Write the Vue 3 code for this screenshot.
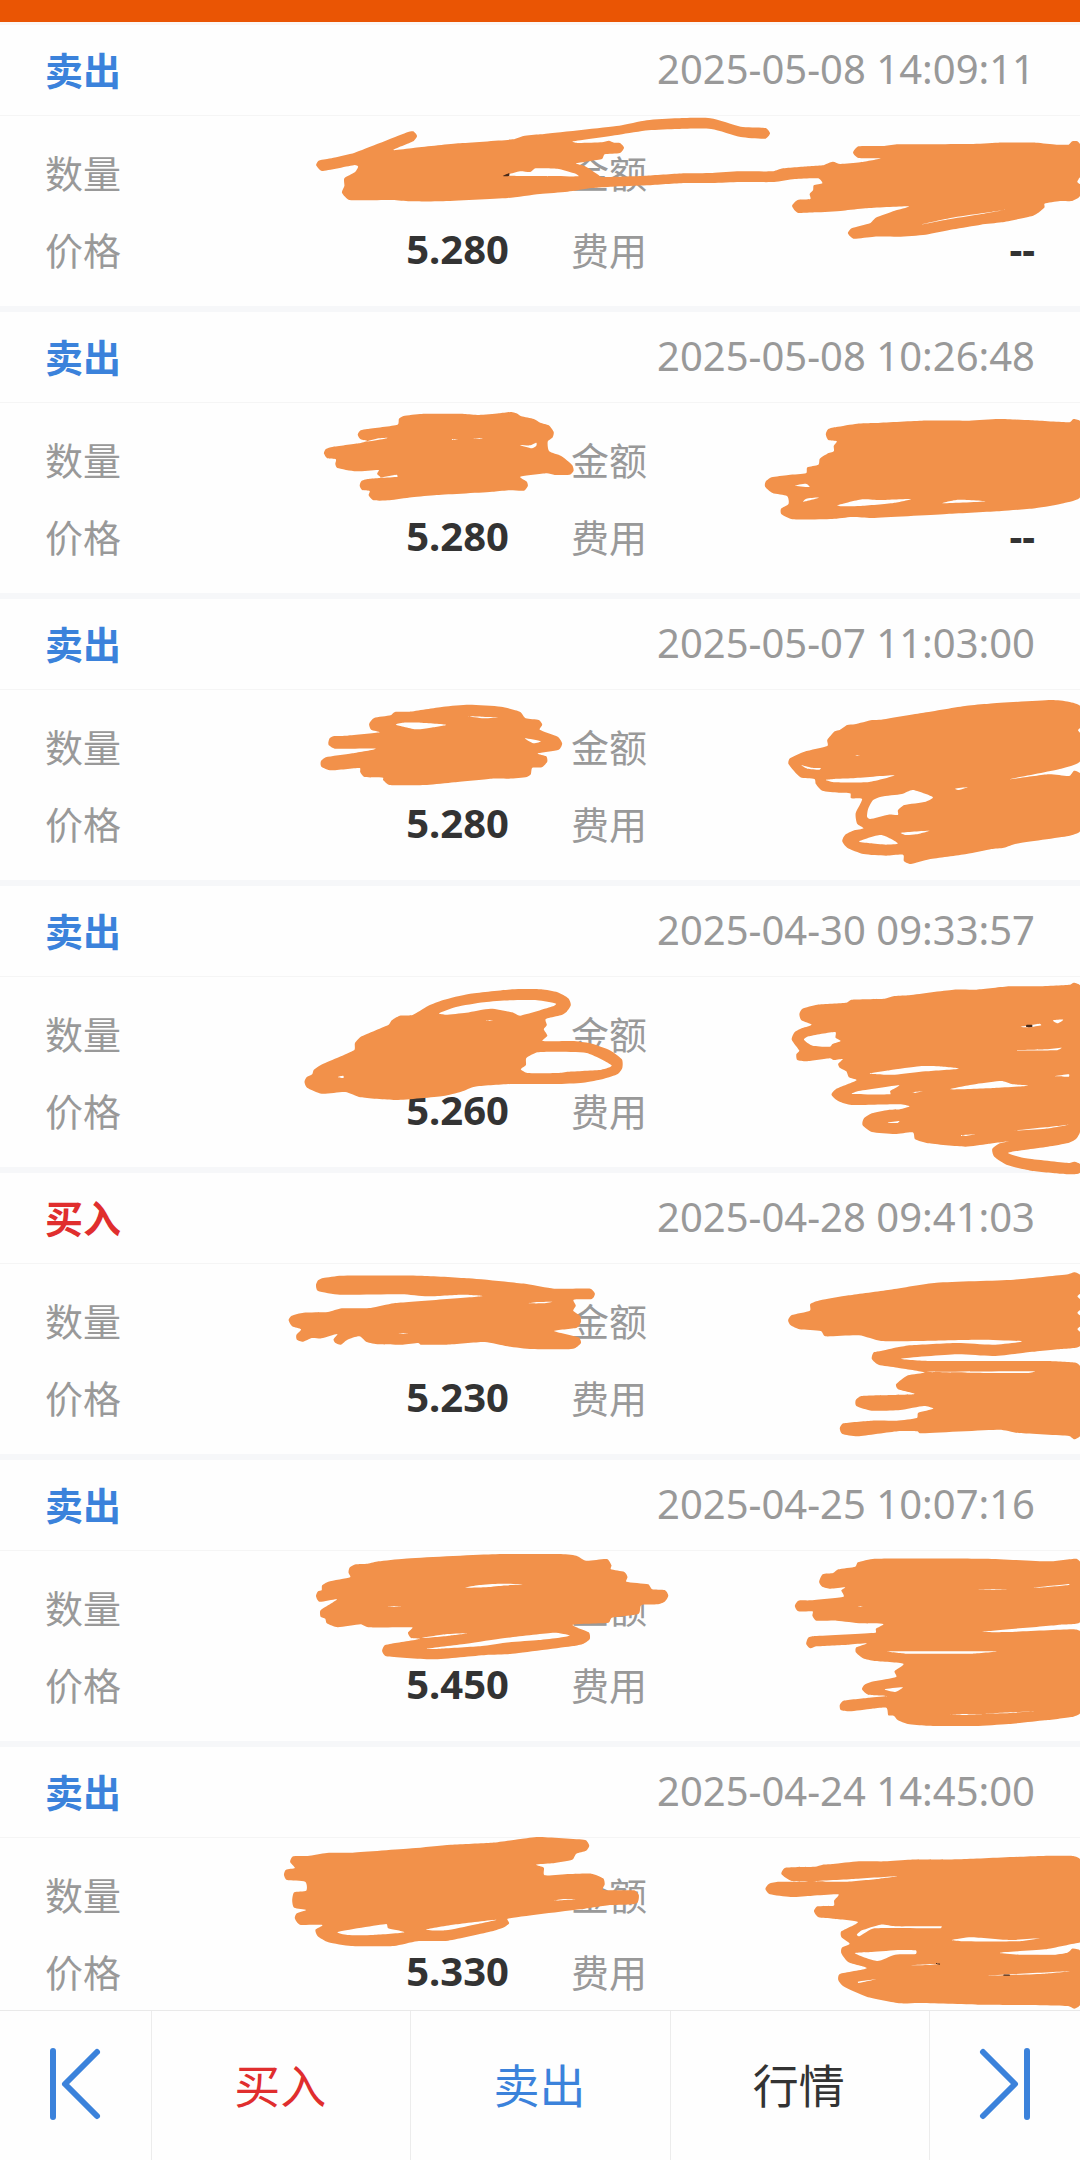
<script setup>
// Each sketch is drawn in its own box: x, y, w, h place it on the list,
// vw and vh give the drawing's coordinate range.
const records = [
  {
    side: 'sell', time: '2025-05-08 14:09:11', price: '5.280', fee: '--',
    sketch: {
      x: 0, y: 0, w: 1080, h: 320, vw: 3136, vh: 960,
      ink: [
        '918,496 925,482 945,478 968,473 1030,458 1185,396 1200,394 1211,408 1200,424 1142,450 1200,444 1330,430 1490,418 1520,408 1568,403 1798,377 1878,361 1968,355 2063,355 2151,380 2223,384 2236,400 2223,416 2151,411 2065,387 1968,387 1883,391 1798,404 1663,424 1678,429 1748,427 1768,422 1783,428 1800,429 1812,443 1800,459 1756,463 1748,477 1673,490 1698,498 1738,525 1746,531 1878,527 1988,520 2068,519 2148,514 2243,514 2268,506 2348,499 2388,496 2418,485 2440,492 2498,487 2558,475 2493,474 2477,458 2493,439 2568,438 2608,433 2818,432 2898,428 3008,428 3068,434 3103,434 3113,424 3128,424 3138,436 3138,580 3133,592 3113,603 3078,603 3033,611 3033,622 3018,636 2998,648 2908,667 2848,674 2768,688 2688,704 2608,710 2538,710 2478,716 2462,700 2473,685 2526,670 2543,653 2598,632 2638,619 2513,625 2448,632 2368,637 2316,638 2300,618 2316,600 2353,597 2351,582 2361,570 2363,556 2388,550 2376,535 2308,537 2248,546 2148,546 2068,549 1988,549 1878,556 1778,560 1718,564 1648,575 1568,582 1475,594 1280,604 1190,604 1140,600 1015,600 993,578 1000,558 1000,535 1030,517 1040,500 1030,495 935,513'
      ],
      gaps: [
        '1478,523 1510,514 1540,516 1555,505 1618,506 1668,520 1680,529 1568,528 1478,527',
        '2673,674 2760,654 2850,640 2920,629 2850,642 2760,657',
        '3128,545 3138,530 3138,552'
      ],
      specks: ['1460,528 1478,520 1478,528']
    }
  },
  {
    side: 'sell', time: '2025-05-08 10:26:48', price: '5.280', fee: '--',
    sketch: {
      x: 300, y: 390, w: 780, h: 220, vw: 1568, vh: 660,
      ink: [
        '48,190 52,177 65,171 118,160 135,153 122,148 116,134 122,121 135,117 196,104 199,86 208,78 245,72 330,72 360,75 400,70 425,66 435,70 445,79 470,87 483,98 500,106 510,126 508,142 498,155 501,184 525,198 547,225 550,242 542,254 512,255 496,250 443,260 456,275 458,288 450,302 422,301 390,305 275,315 225,322 180,331 148,331 138,316 140,303 125,300 120,287 124,272 140,266 162,263 155,252 158,240 113,244 75,234 71,222 72,208 55,205',
        '1057,133 1062,117 1078,111 1120,101 1155,99 1250,92 1345,92 1405,87 1470,91 1547,97 1555,87 1568,93 1568,322 1535,340 1478,355 1410,363 1300,372 1150,384 1110,381 1070,387 990,388 968,373 967,356 982,342 979,318 950,309 935,290 936,275 948,262 982,255 1017,250 1020,232 1042,224 1045,206 1060,191 1073,184 1073,168 1079,154 1062,150'
      ],
      gaps: [
        '134,155 158,145 176,143 168,147', '305,148 317,148 311,150', '347,147 367,144 361,147',
        '442,165 462,166 475,158 475,167 466,175', '162,263 194,254 196,260',
        '995,287 1017,281 1024,291', '1012,335 1018,326 1043,323', '1080,347 1130,328 1165,330 1228,327 1193,339 1125,348', '1292,340 1323,329 1380,334'
      ],
      specks: []
    }
  },
  {
    side: 'sell', time: '2025-05-07 11:03:00', price: '5.280', fee: '',
    sketch: {
      x: 300, y: 680, w: 780, h: 220, vw: 1568, vh: 660,
      ink: [
        '57,187 60,174 69,168 95,167 160,157 143,149 139,132 149,114 182,106 191,96 220,95 288,80 340,74 404,80 442,95 454,115 480,120 487,134 482,149 518,170 527,190 520,209 478,220 495,229 497,245 486,262 467,263 464,283 456,291 420,296 385,296 310,307 255,315 180,315 167,300 167,293 130,291 121,276 120,264 62,271 43,260 42,244 52,232 105,220 153,206 70,206 58,196',
        '982,252 985,235 1014,215 1060,198 1060,180 1075,154 1085,150 1100,135 1115,133 1150,120 1168,119 1250,99 1340,77 1385,71 1510,60 1545,65 1568,78 1568,244 1530,266 1425,298 1505,283 1546,288 1556,272 1568,280 1568,454 1545,468 1440,491 1415,503 1390,507 1340,522 1265,538 1228,552 1214,543 1212,524 1178,527 1133,522 1100,503 1090,483 1096,464 1112,452 1133,445 1120,431 1117,400 1130,357 1108,355 1106,340 1083,338 1050,332 1037,312 1034,297 1006,292'
      ],
      gaps: [
        '193,134 208,128 243,128 294,134 262,143 234,148', '338,109 364,110 399,112 369,115', '452,175 484,184 469,190',
        '1008,256 1028,263 1047,264 1044,269 1020,266', '1057,300 1074,297 1110,295 1195,286 1144,306 1075,307', '1140,410 1142,387 1152,360 1168,350 1210,342 1232,330 1272,351 1258,365 1215,375 1202,391 1202,405 1183,404 1146,417', '1124,484 1168,465 1202,490 1178,494 1145,490', '1208,458 1265,452 1238,463 1218,465', '1317,326 1342,322 1325,330', '1116,226 1125,226 1120,228', '1564,151 1568,145 1568,158'
      ],
      specks: []
    }
  },
  {
    side: 'sell', time: '2025-04-30 09:33:57', price: '5.260', fee: '',
    sketch: {
      x: 280, y: 970, w: 800, h: 220, vw: 1568, vh: 660,
      ink: [
        '48,336 52,322 63,313 66,300 80,285 145,241 147,219 160,199 213,164 219,151 235,137 260,135 290,108 320,90 370,72 455,58 512,58 544,67 565,85 570,105 562,125 552,135 521,147 523,165 517,178 524,197 515,213 573,213 608,220 648,242 670,268 671,293 662,312 635,326 594,338 540,342 455,342 382,350 355,365 320,378 228,390 158,382 128,366 82,371 53,353',
        '1018,132 1024,116 1053,104 1110,98 1120,89 1185,86 1202,79 1230,76 1320,59 1365,59 1430,49 1480,49 1548,44 1556,38 1568,46 1568,485 1560,507 1545,519 1505,530 1462,539 1427,549 1462,565 1545,579 1557,575 1568,582 1568,608 1555,613 1530,611 1472,602 1427,586 1400,560 1396,537 1409,521 1429,514 1387,522 1343,530 1270,520 1245,508 1240,487 1205,492 1160,486 1142,466 1144,446 1160,430 1192,420 1215,418 1234,409 1215,403 1120,405 1095,394 1081,374 1090,357 1130,331 1115,322 1110,304 1097,293 1094,282 1103,267 1085,270 1078,265 1032,274 1014,270 1012,253 1018,242 1003,209 1009,186 1024,174 1042,164 1022,151'
      ],
      gaps: [
        '312,130 345,111 400,97 452,91 504,91 541,101 535,109 471,137 455,127 413,116 365,128 325,134', '472,298 482,285 483,264 505,247 540,245 601,249 650,286 630,299 565,305 545,309 485,309', '113,321 124,317 124,324', '404,151 417,151 411,153',
        '1027,209 1036,199 1088,186 1089,203 1099,213 1083,222 1078,230 1044,227', '1452,170 1489,161 1492,166 1468,172', '1515,151 1535,149 1524,160', '1438,241 1502,238 1532,233 1522,241', '1156,311 1195,301 1254,289 1290,289 1330,296 1265,304 1205,314', '1121,372 1132,364 1213,346 1196,363 1196,373', '1240,367 1260,364 1245,369', '1314,358 1365,342 1414,333 1434,342 1466,347 1400,354', '1519,319 1546,313 1546,320', '1191,458 1214,453 1210,459', '1335,496 1363,493 1345,498', '1439,482 1500,472 1546,464 1500,476'
      ],
      specks: ['1463,165 1474,165 1474,171 1463,171']
    }
  },
  {
    side: 'buy', time: '2025-04-28 09:41:03', price: '5.230', fee: '',
    sketch: {
      x: 270, y: 1260, w: 810, h: 200, vw: 1568, vh: 600,
      ink: [
        '89,76 93,61 103,54 138,47 290,47 385,55 497,72 550,86 620,86 629,101 623,117 588,119 592,137 587,152 600,167 602,186 594,203 550,213 597,232 602,249 590,265 575,268 508,267 460,259 416,246 342,254 292,254 287,249 257,254 210,253 187,246 173,229 150,239 137,254 126,248 123,238 130,222 100,235 81,234 64,245 52,239 51,225 60,208 43,199 36,180 42,167 65,158 112,156 139,145 195,144 240,130 410,109 370,104 305,109 255,103 135,104 93,93',
        '1003,181 1010,165 1045,152 1046,132 1065,121 1120,106 1200,89 1290,68 1440,59 1545,43 1557,37 1568,45 1568,257 1530,267 1460,278 1400,288 1330,283 1222,296 1275,303 1505,303 1560,308 1568,318 1568,528 1557,538 1547,528 1450,519 1412,509 1258,520 1253,514 1215,514 1138,529 1108,522 1103,505 1110,490 1165,482 1213,482 1252,474 1255,458 1284,446 1266,438 1220,450 1165,452 1135,438 1134,420 1145,408 1203,405 1248,402 1216,388 1212,373 1235,346 1267,337 1215,323 1178,314 1165,297 1168,278 1180,274 1215,262 1240,256 1330,249 1400,254 1455,244 1375,239 1280,242 1183,243 1140,226 1075,229 1066,213 1025,208 1008,196'
      ],
      gaps: ['500,130 518,126 547,125 530,130', '249,220 267,220 258,222', '1267,336 1480,334 1465,339 1350,338', '1563,109 1568,102 1568,117', '1563,158 1568,151 1568,166', '1563,207 1568,200 1568,215'],
      specks: []
    }
  },
  {
    side: 'sell', time: '2025-04-25 10:07:16', price: '5.450', fee: '',
    sketch: {
      x: 270, y: 1540, w: 810, h: 200, vw: 1568, vh: 600,
      ink: [
        '152,98 154,83 166,73 189,71 210,64 260,56 430,43 560,42 593,47 612,62 652,57 661,76 660,88 686,96 692,111 690,125 732,133 740,148 764,150 771,167 764,185 750,193 719,195 713,222 662,233 655,248 586,254 617,277 619,297 607,311 587,318 465,342 418,345 315,358 225,349 217,333 222,316 235,311 290,297 273,294 267,278 275,262 190,262 175,253 131,262 110,250 107,236 98,230 98,211 130,178 96,185 89,168 93,154 100,151 101,136 113,125 155,112',
        '1063,126 1070,103 1090,99 1100,88 1133,80 1138,67 1170,56 1385,56 1508,64 1560,56 1568,65 1568,246 1530,254 1380,275 1430,276 1555,268 1568,274 1568,520 1555,530 1500,541 1430,552 1365,558 1270,557 1235,552 1215,540 1208,528 1197,526 1193,503 1165,506 1122,514 1105,510 1103,495 1110,482 1160,473 1195,468 1158,464 1146,448 1151,434 1169,424 1212,411 1209,394 1226,371 1170,363 1148,355 1134,337 1135,322 1155,310 1120,314 1058,319 1046,325 1038,312 1042,293 1055,288 1172,278 1173,266 1187,252 1145,250 1097,242 1058,242 1050,227 1050,214 1023,214 1016,198 1023,182 1045,181 1110,170 1106,151 1113,142 1085,146 1069,140'
      ],
      gaps: [
        '378,143 405,135 445,131 490,133 450,137 415,142', '228,199 254,199 240,201', '295,294 340,283 382,280 348,287', '303,326 380,311 455,294 550,278 580,286 560,293 520,300 455,308 410,318 330,326',
        '1370,148 1427,148 1400,150', '1478,143 1547,132 1547,135 1490,143', '1196,334 1405,334 1360,341 1230,341', '1190,448 1225,442 1210,456', '1316,522 1380,523 1345,525', '1385,521 1480,514 1420,520', '1138,199 1147,199 1143,201'
      ],
      specks: []
    }
  },
  {
    side: 'sell', time: '2025-04-24 14:45:00', price: '5.330', fee: '',
    sketch: {
      x: 270, y: 1820, w: 810, h: 200, vw: 1568, vh: 600,
      ink: [
        '39,126 45,109 73,108 110,99 160,98 275,85 350,74 430,68 485,57 520,51 610,60 618,77 612,92 593,101 585,119 545,130 515,134 530,143 532,166 580,162 622,161 645,175 648,193 645,210 705,211 714,225 711,249 690,254 660,255 600,268 460,296 463,310 453,322 430,334 345,362 285,364 240,378 157,378 113,367 92,348 88,329 101,315 58,314 48,295 52,280 70,270 47,263 43,242 47,217 70,212 68,185 33,180 27,164 31,149 48,144',
        '990,162 998,143 1055,140 1070,134 1090,132 1140,124 1190,124 1240,119 1335,118 1490,108 1555,108 1568,118 1568,367 1535,383 1470,395 1413,399 1450,404 1520,404 1545,397 1556,382 1568,392 1568,555 1557,566 1545,558 1400,554 1370,554 1255,549 1220,550 1155,530 1110,499 1100,480 1103,462 1155,445 1120,427 1106,400 1107,383 1122,371 1106,351 1106,334 1138,306 1090,296 1062,292 1053,274 1060,259 1091,257 1092,242 1100,223 1050,227 1008,231 968,223 959,207 966,191 985,185 1050,186 1010,183'
      ],
      gaps: [
        '131,336 225,312 229,325 260,337 200,345 150,345', '302,329 360,313 438,299 395,314 340,331', '550,242 570,237 594,238',
        '1050,184 1130,177 1214,169 1180,176 1115,185', '1136,344 1146,331 1182,314 1210,319 1300,319 1298,325 1170,325 1141,349', '1320,360 1357,352 1430,360 1490,355 1450,364 1340,364', '1413,398 1500,388 1568,368 1568,388 1550,385 1543,398 1515,403', '1132,400 1165,396 1220,390 1250,391 1250,402 1210,404 1175,423', '1138,485 1173,478 1140,489', '1235,436 1294,431 1275,435', '1390,467 1547,454 1500,461'
      ],
      specks: ['1289,431 1297,431 1296,434', '1420,464 1432,464 1432,467 1420,467']
    }
  }
]

const sideLabel = { sell: '卖出', buy: '买入' }
const PERIOD = 287
const TOP = 25

// Closed curve through a list of points, with gently rounded corners.
function curve(points) {
  const p = points.split(' ').map((s) => s.split(',').map(Number))
  const n = p.length
  const k = 1 / 9
  let d = `M${p[0]}`
  for (let i = 0; i < n; i++) {
    const a = p[(i + n - 1) % n]
    const b = p[i]
    const c = p[(i + 1) % n]
    const e = p[(i + 2) % n]
    const len = Math.hypot(c[0] - b[0], c[1] - b[1])
    const k1 = k * Math.min(1, (2 * len) / (Math.hypot(c[0] - a[0], c[1] - a[1]) + 1))
    const k2 = k * Math.min(1, (2 * len) / (Math.hypot(e[0] - b[0], e[1] - b[1]) + 1))
    d += `C${b[0] + (c[0] - a[0]) * k1},${b[1] + (c[1] - a[1]) * k1} ${c[0] - (e[0] - b[0]) * k2},${c[1] - (e[1] - b[1]) * k2} ${c}`
  }
  return d + 'Z'
}
</script>

<template>
  <div class="app">
    <header class="topbar"></header>
    <main class="list">
      <article v-for="(r, i) in records" :key="r.time" class="record">
        <div class="head">
          <h2 class="side" :class="r.side">{{ sideLabel[r.side] }}</h2>
          <time class="time">{{ r.time }}</time>
        </div>
        <dl class="details">
          <div class="pair"><dt>数量</dt><dd></dd></div>
          <div class="pair"><dt>金额</dt><dd></dd></div>
          <div class="pair"><dt>价格</dt><dd>{{ r.price }}</dd></div>
          <div class="pair"><dt>费用</dt><dd>{{ r.fee }}</dd></div>
        </dl>
        <svg class="sketch" :viewBox="`0 ${TOP + i * PERIOD} 1080 281`" preserveAspectRatio="none" aria-hidden="true">
          <svg
            class="layer"
            :x="r.sketch.x" :y="r.sketch.y" :width="r.sketch.w" :height="r.sketch.h"
            :viewBox="`0 0 ${r.sketch.vw} ${r.sketch.vh}`" preserveAspectRatio="none"
          >
            <path v-for="s in r.sketch.ink" :key="s" class="ink" :d="curve(s)" />
            <path v-for="s in r.sketch.gaps" :key="s" class="gap" :d="curve(s)" />
            <path v-for="s in r.sketch.specks" :key="s" class="speck" :d="curve(s)" />
          </svg>
        </svg>
      </article>
    </main>
    <nav class="actions">
      <button class="action edge" type="button" aria-label="上一条">
        <svg class="icon" viewBox="0 0 54 76"><path d="M4 5V71M48 6L16 38L48 70" /></svg>
      </button>
      <button class="action buy" type="button">买入</button>
      <button class="action sell" type="button">卖出</button>
      <button class="action" type="button">行情</button>
      <button class="action edge" type="button" aria-label="下一条">
        <svg class="icon" viewBox="0 0 54 76"><path d="M49 5V71M5 6L37 38L5 70" /></svg>
      </button>
    </nav>
  </div>
</template>

<style>
body {
  margin: 0;
  background: #fefefe;
}
</style>

<style scoped>
.app {
  display: flex;
  flex-direction: column;
  height: 100vh;
  overflow: hidden;
  color: #333;
  background: #fefefe;
  font-family: "Noto Sans CJK SC", "Noto Sans", sans-serif;
}
.topbar {
  flex: none;
  height: 22px;
  background: #ea5504;
  border-bottom: 3px solid #fbf7f5;
}
.list {
  flex: 1;
  min-height: 0;
  overflow: hidden auto;
  scrollbar-width: none;
}
.record {
  position: relative;
  border-bottom: 6px solid #f6f7f9;
}
.head {
  display: flex;
  align-items: center;
  justify-content: space-between;
  height: 88px;
  padding: 0 45px 2px;
  border-bottom: 1px solid #f5f5f5;
}
.side {
  margin: 0;
  font-size: 38px;
  line-height: 56px;
  font-weight: 700;
}
.time {
  font-family: "Noto Sans", "Noto Sans CJK SC", sans-serif;
  font-size: 40px;
  line-height: 56px;
  color: #999;
}
.sell {
  color: #3b82db;
}
.buy {
  color: #e02e2e;
}
.details {
  display: grid;
  grid-template-columns: 1fr 1fr;
  align-content: start;
  column-gap: 62px;
  height: 172px;
  margin: 0;
  padding: 18px 45px 0;
}
.pair {
  display: flex;
  justify-content: space-between;
  height: 77px;
  font-size: 38px;
  line-height: 76px;
}
dt {
  color: #999;
}
dd {
  margin: 0;
  font-family: "Noto Sans", "Noto Sans CJK SC", sans-serif;
  font-size: 40px;
  font-weight: 700;
}
.sketch {
  position: absolute;
  z-index: 1;
  top: 0;
  left: 0;
  width: 100%;
  height: 100%;
  overflow: visible;
  pointer-events: none;
}
.layer {
  overflow: visible;
}
.ink {
  fill: #f2914a;
}
.gap {
  fill: #fefefe;
}
.speck {
  fill: #4a2a18;
}
.actions {
  flex: none;
  display: flex;
  height: 149px;
  border-top: 1px solid #e9e9e9;
}
.action {
  flex: 1;
  display: flex;
  align-items: center;
  justify-content: center;
  padding: 0 2px 6px 0;
  border: 0;
  border-left: 1px solid #ececec;
  background: #fefefe;
  color: #333;
  font: inherit;
  font-size: 46px;
}
.action.buy {
  color: #e02e2e;
}
.action.sell {
  color: #3b82db;
}
.action.edge {
  flex: 0 0 151px;
  padding: 0 0 4px;
}
.action:first-child {
  border-left: 0;
}
.icon {
  width: 54px;
  height: 76px;
  fill: none;
  stroke: #3b82db;
  stroke-width: 6;
  stroke-linecap: round;
  stroke-linejoin: round;
}
</style>
